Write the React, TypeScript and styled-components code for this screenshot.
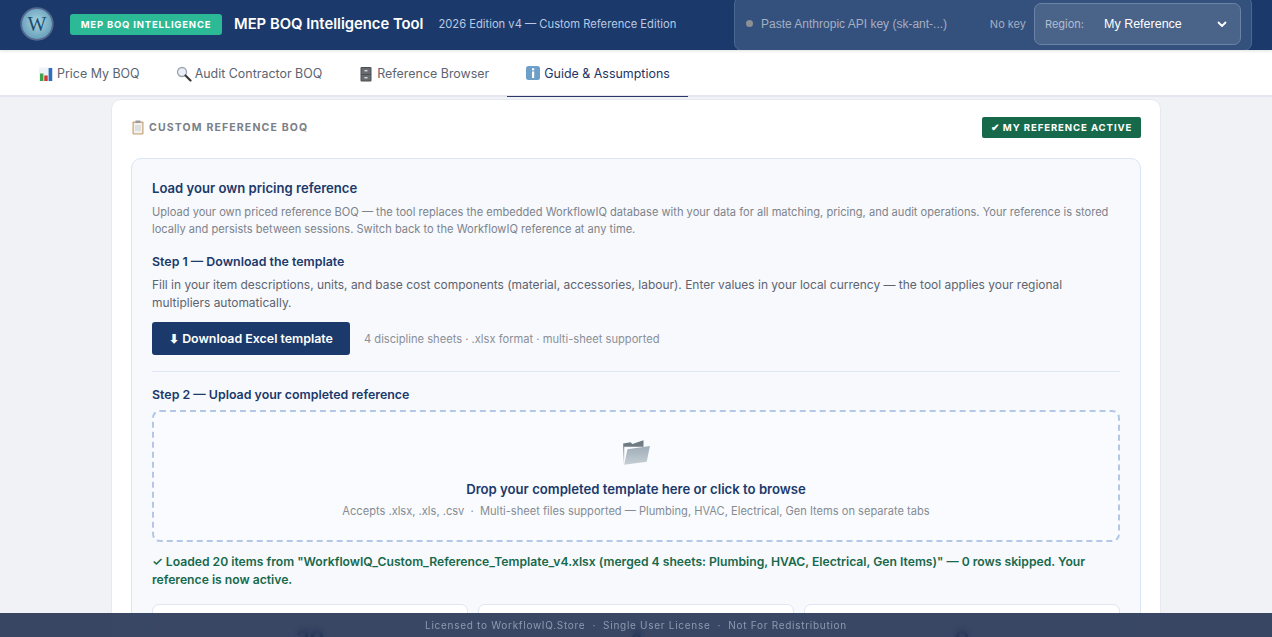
import React from "react";
import styled, { createGlobalStyle } from "styled-components";

const Global = createGlobalStyle`
  html, body { margin: 0; padding: 0; height: 100%; overflow: hidden; }
  body { font-family: Inter, "Liberation Sans", sans-serif; background: #f0f2f6; -webkit-font-smoothing: antialiased; }
  * { box-sizing: border-box; }
`;

const Page = styled.div`height: 637px; overflow: hidden; display: flex; flex-direction: column;`;
const Header = styled.header`
  height: 50px; flex: none; background: #1b3a6b; display: flex; align-items: center;
  padding: 0 20px 2px; box-shadow: 0 1px 3px rgba(0,0,0,.12); position: relative; z-index: 2; overflow: hidden;
`;
const Logo = styled.div`width: 34px; height: 34px; flex: none; margin-right: 16px;`;
const Badge = styled.span`
  background: #2bb996; color: #fff; font-size: 9.5px; font-weight: 700; letter-spacing: .8px;
  height: 21px; width: 152px; display: flex; align-items: center; justify-content: center;
  border-radius: 3px; margin-right: 12px; white-space: nowrap;
`;
const Title = styled.h1`margin: 0 15px 0 0; color: #fff; font-size: 14.8px; font-weight: 600; white-space: nowrap;`;
const Sub = styled.span`color: #b9c9e2; font-size: 11.2px; white-space: nowrap;`;
const KeyBox = styled.div`
  margin-left: auto; width: 518px; height: 55px; align-self: flex-start; margin-top: -4px; padding: 0 10px 0 11px;
  background: #34517d; border: 1px solid #4c6792; border-radius: 8px; display: flex; align-items: center; flex: none;
`;
const Dot = styled.span`width: 7px; height: 7px; border-radius: 50%; background: #8d8f95; margin-right: 8px; flex: none;`;
const KeyInput = styled.span`color: #a4afc2; font-family: "Liberation Sans", sans-serif; font-size: 12px; flex: 1; white-space: nowrap;`;
const KeyState = styled.span`color: #a4afc2; font-size: 11px; margin-right: 8px; white-space: nowrap;`;
const Region = styled.div`
  width: 207px; height: 42px; background: #4a6389; border: 1px solid #6b83a8; border-radius: 7px;
  display: flex; align-items: center; padding: 0 12px 0 10px; flex: none;
`;
const RegionLabel = styled.span`color: #b2bdcf; font-size: 11px; width: 59px; white-space: nowrap;`;
const RegionValue = styled.span`color: #fff; font-family: "Liberation Sans", sans-serif; font-size: 12.5px; flex: 1; white-space: nowrap;`;

const Tabs = styled.nav`
  height: 47px; flex: none; background: #fff; border-bottom: 2px solid #e4e7f1; display: flex; padding-left: 20px;
`;
const Tab = styled.div<{ $active?: boolean }>`
  height: 47px; padding: 0 18px; display: flex; align-items: center; gap: 3px; font-size: 12.45px; white-space: nowrap;
  color: ${p => (p.$active ? "#1e3566" : "#5c6472")};
  border-bottom: ${p => (p.$active ? "1px solid #2a3768" : "none")};
`;
const Main = styled.main`flex: 1; padding: 2px 111px 0; min-height: 0;`;
const Card = styled.section`
  background: #fff; border: 1px solid #e6e9f2; border-radius: 10px; padding: 17px 19px 20px; width: 1050px;
`;
const CardHead = styled.div`display: flex; justify-content: space-between; align-items: center; height: 20px; margin-bottom: 21px;`;
const CardTitle = styled.div`display: flex; align-items: center; gap: 4px; font-size: 10.5px; font-weight: 700; letter-spacing: 1.15px; color: #7b8088;`;
const Active = styled.span`
  background: #17694c; color: #fff; font-size: 9.6px; font-weight: 700; letter-spacing: .9px; border-radius: 2px;
  width: 159px; height: 21px; display: flex; align-items: center; justify-content: center; white-space: nowrap;
`;
const Panel = styled.div`
  background: #f7f9fd; border: 1px solid #dbe5f4; border-radius: 10px; padding: 20px 20px 0;
`;
const Heading = styled.h2`margin: 0 0 7px; color: #1b3a6b; font-size: 13.1px; font-weight: 600; line-height: 18px;`;
const Desc = styled.p`margin: 0 0 15px; color: #7d838c; font-size: 11.1px; line-height: 17px;`;
const Step = styled.h3`margin: 0 0 6px; color: #1b3a6b; font-size: 12.4px; font-weight: 600; line-height: 17px;`;
const Body = styled.p`margin: 0 0 10px; color: #5d6470; font-size: 11.96px; line-height: 18px;`;
const DownloadRow = styled.div`display: flex; align-items: center; gap: 14px; padding-bottom: 16px; border-bottom: 1px solid #dfe6f5; margin-bottom: 14px;`;
const Download = styled.button`
  width: 198px; height: 33px; border: 0; border-radius: 3px; background: #1b3a6b; color: #fff;
  font: 600 12.4px Inter, sans-serif; display: flex; align-items: center; justify-content: center; gap: 3px;
`;
const Hint = styled.span`color: #8a8f97; font-size: 11.15px;`;
const Drop = styled.div`
  margin-top: 7px; height: 132px; border: 2px dashed #b3c8e6; border-radius: 8px; background: #fafbfe;
  display: flex; flex-direction: column; align-items: center; padding-top: 25px;
`;
const DropTitle = styled.div`margin-top: 14px; color: #1b3a6b; font-size: 13.15px; font-weight: 600; line-height: 17px;`;
const DropSub = styled.div`margin-top: 6px; color: #858b93; font-size: 11.1px; line-height: 15px; white-space: pre;`;
const Loaded = styled.p`margin: 11px 0 15px; color: #17694c; font-size: 12.17px; font-weight: 600; line-height: 18px;`;
const Stats = styled.div`display: grid; grid-template-columns: repeat(3, 1fr); gap: 10px;`;
const Stat = styled.div`height: 70px; background: #fff; border: 1px solid #e1e5f3; border-radius: 7px; display: flex; justify-content: center; padding-top: 20px;`;
const StatNum = styled.span<{ $color: string }>`color: ${p => p.$color}; font-size: 22px; font-weight: 700; line-height: 26px;`;
const Footer = styled.footer`
  position: fixed; left: 0; right: 0; bottom: 0; height: 24px; background: rgba(30,46,78,.88); backdrop-filter: blur(4px);
  color: #8e9ab0; font-size: 10px; letter-spacing: .72px; display: flex; align-items: center; justify-content: center; white-space: pre; z-index: 5;
`;

const Bars = () => (
  <svg width="16" height="16" viewBox="0 0 16 16"><rect x="1" y="1.5" width="14" height="14" fill="#eef3fa"/><rect x="2" y="7.5" width="3.4" height="7.5" fill="#3ca648"/><rect x="6.3" y="9.5" width="3.4" height="5.5" fill="#d2382f"/><rect x="10.6" y="2" width="3.6" height="13" fill="#2f6fc0"/></svg>
);
const Lens = () => (
  <svg width="16" height="16" viewBox="0 0 16 16"><circle cx="6" cy="6" r="4.5" fill="#e9eff5" stroke="#9da4ad" strokeWidth="1.3"/><path d="M9.5 9.5 14.5 14.5" stroke="#3a3a3a" strokeWidth="2.2" strokeLinecap="round"/></svg>
);
const Cabinet = () => (
  <svg width="16" height="16" viewBox="0 0 16 16"><rect x="2.5" y="1" width="11" height="14.5" rx="1" fill="#4b4f54"/><rect x="3.5" y="2" width="9" height="6" fill="#686c71"/><rect x="3.5" y="9" width="9" height="5.5" fill="#686c71"/><rect x="6.5" y="4" width="3" height="1.4" fill="#d9d9d9"/><rect x="6.5" y="11" width="3" height="1.4" fill="#d9d9d9"/></svg>
);
const Info = () => (
  <svg width="16" height="16" viewBox="0 0 16 16"><rect x="1" y="1" width="14" height="14" rx="2.5" fill="#6d9fc9"/><rect x="7" y="6.5" width="2.2" height="6.5" fill="#fff"/><rect x="7" y="3.3" width="2.2" height="2" fill="#fff"/></svg>
);
const Clipboard = () => (
  <svg width="14" height="15" viewBox="0 0 14 15"><rect x="1.5" y="1.5" width="11" height="13" rx="1" fill="#c9a271"/><rect x="2.7" y="2.8" width="8.6" height="10.6" fill="#f1f1ef"/><rect x="4.5" y=".5" width="5" height="2.5" fill="#9a9a9a"/><path d="M4 6h6M4 8h6M4 10h6" stroke="#bbb" strokeWidth=".7"/></svg>
);
const Folder = () => (
  <svg width="30" height="30" viewBox="0 0 28 28">
    <defs><linearGradient id="fold" x1="0" y1="0" x2="0" y2="1"><stop offset="0" stopColor="#9fadb8"/><stop offset="1" stopColor="#c5ced4"/></linearGradient></defs>
    <path d="M2 6 9 5l1.5 1.5L21 3v6H3l-.2 17z" fill="#6f7a82"/>
    <path d="M6 11.5 27 8.5 24 23 3 26z" fill="url(#fold)"/>
  </svg>
);
const Chevron = () => (
  <svg width="12" height="12" viewBox="0 0 12 12" fill="none"><path d="M2.5 4.5 6 8l3.5-3.5" stroke="#fff" strokeWidth="1.8" strokeLinecap="round" strokeLinejoin="round"/></svg>
);
const WLogo = () => (
  <svg width="34" height="34" viewBox="0 0 34 34">
    <defs><radialGradient id="wl" cx=".5" cy=".45" r=".6"><stop offset="0" stopColor="#a9d4e2"/><stop offset="1" stopColor="#5e9ab6"/></radialGradient></defs>
    <circle cx="17" cy="17" r="15.8" fill="url(#wl)" stroke="#56688f" strokeWidth="1.8"/>
    <text x="17" y="24" textAnchor="middle" fontFamily="Liberation Serif, serif" fontSize="20" fill="#1d4d6d">W</text>
  </svg>
);

export default function App() {
  return (
    <Page>
      <Global />
      <Header>
        <Logo><WLogo /></Logo>
        <Badge>MEP BOQ INTELLIGENCE</Badge>
        <Title>MEP BOQ Intelligence Tool</Title>
        <Sub>2026 Edition v4 — Custom Reference Edition</Sub>
        <KeyBox>
          <Dot />
          <KeyInput>Paste Anthropic API key (sk-ant-...)</KeyInput>
          <KeyState>No key</KeyState>
          <Region>
            <RegionLabel>Region:</RegionLabel>
            <RegionValue>My Reference</RegionValue>
            <Chevron />
          </Region>
        </KeyBox>
      </Header>
      <Tabs>
        <Tab><Bars />Price My BOQ</Tab>
        <Tab><Lens />Audit Contractor BOQ</Tab>
        <Tab><Cabinet />Reference Browser</Tab>
        <Tab $active><Info />Guide &amp; Assumptions</Tab>
      </Tabs>
      <Main>
        <Card>
          <CardHead>
            <CardTitle><Clipboard />CUSTOM REFERENCE BOQ</CardTitle>
            <Active>✔ MY REFERENCE ACTIVE</Active>
          </CardHead>
          <Panel>
            <Heading>Load your own pricing reference</Heading>
            <Desc>Upload your own priced reference BOQ — the tool replaces the embedded WorkflowIQ database with your data for all matching, pricing, and audit operations. Your reference is stored locally and persists between sessions. Switch back to the WorkflowIQ reference at any time.</Desc>
            <Step>Step 1 — Download the template</Step>
            <Body>Fill in your item descriptions, units, and base cost components (material, accessories, labour). Enter values in your local currency — the tool applies your regional multipliers automatically.</Body>
            <DownloadRow>
              <Download>⬇ Download Excel template</Download>
              <Hint>4 discipline sheets · .xlsx format · multi-sheet supported</Hint>
            </DownloadRow>
            <Step>Step 2 — Upload your completed reference</Step>
            <Drop>
              <Folder />
              <DropTitle>Drop your completed template here or click to browse</DropTitle>
              <DropSub>Accepts .xlsx, .xls, .csv  ·  Multi-sheet files supported — Plumbing, HVAC, Electrical, Gen Items on separate tabs</DropSub>
            </Drop>
            <Loaded>✓ Loaded 20 items from "WorkflowIQ_Custom_Reference_Template_v4.xlsx (merged 4 sheets: Plumbing, HVAC, Electrical, Gen Items)" — 0 rows skipped. Your reference is now active.</Loaded>
            <Stats>
              <Stat><StatNum $color="#1b3a6b">20</StatNum></Stat>
              <Stat><StatNum $color="#1b3a6b">4</StatNum></Stat>
              <Stat><StatNum $color="#5f2a5c">0</StatNum></Stat>
            </Stats>
          </Panel>
        </Card>
      </Main>
      <Footer>Licensed to WorkflowIQ.Store  ·  Single User License  ·  Not For Redistribution</Footer>
    </Page>
  );
}
